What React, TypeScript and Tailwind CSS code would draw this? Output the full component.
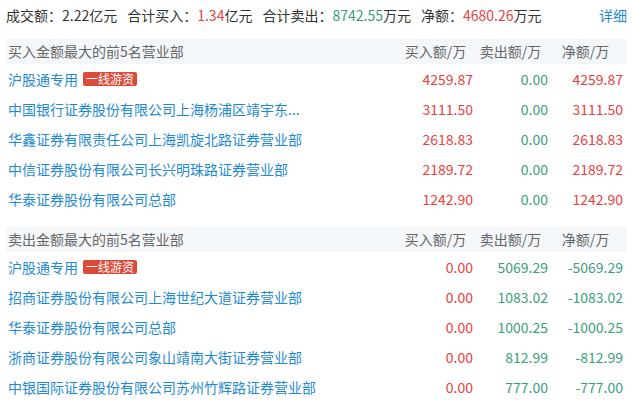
const FONT = '"Noto Sans CJK SC", "Open Sans", sans-serif';

type Row = {
  name: string;
  badge?: string;
  buy: string;
  sell: string;
  net: string;
};

const buyRows: Row[] = [
  { name: '沪股通专用', badge: '一线游资', buy: '4259.87', sell: '0.00', net: '4259.87' },
  { name: '中国银行证券股份有限公司上海杨浦区靖宇东...', buy: '3111.50', sell: '0.00', net: '3111.50' },
  { name: '华鑫证券有限责任公司上海凯旋北路证券营业部', buy: '2618.83', sell: '0.00', net: '2618.83' },
  { name: '中信证券股份有限公司长兴明珠路证券营业部', buy: '2189.72', sell: '0.00', net: '2189.72' },
  { name: '华泰证券股份有限公司总部', buy: '1242.90', sell: '0.00', net: '1242.90' },
];

const sellRows: Row[] = [
  { name: '沪股通专用', badge: '一线游资', buy: '0.00', sell: '5069.29', net: '-5069.29' },
  { name: '招商证券股份有限公司上海世纪大道证券营业部', buy: '0.00', sell: '1083.02', net: '-1083.02' },
  { name: '华泰证券股份有限公司总部', buy: '0.00', sell: '1000.25', net: '-1000.25' },
  { name: '浙商证券股份有限公司象山靖南大街证券营业部', buy: '0.00', sell: '812.99', net: '-812.99' },
  { name: '中银国际证券股份有限公司苏州竹辉路证券营业部', buy: '0.00', sell: '777.00', net: '-777.00' },
];

function Section({ title, rows }: { title: string; rows: Row[] }) {
  return (
    <div>
      {/* header band */}
      <div className="flex h-[25px] items-center bg-[#f4f7fa] pl-[2px] text-[14px] text-[#666666]">
        <div className="flex-1">{title}</div>
        <div className="w-[75px] text-center">买入额/万</div>
        <div className="w-[75px] text-center">卖出额/万</div>
        <div className="w-[75px] text-center">净额/万</div>
        <div className="w-[4px]" />
      </div>
      {rows.map((r, i) => {
        const netColor = r.net.startsWith('-') ? 'text-[#3a9e7c]' : 'text-[#e84141]';
        return (
          <div key={i} className="flex h-[30px] items-center pl-[2px] text-[14px]">
            <div className="flex flex-1 items-center gap-[5px] overflow-hidden">
              <span className="whitespace-nowrap text-[#1f8ad2]">{r.name}</span>
              {r.badge && (
                <span className="rounded-[2px] bg-[#dd4a39] px-[3px] text-[12px] leading-[14px] text-white">
                  {r.badge}
                </span>
              )}
            </div>
            <div className="w-[75px] text-right text-[#e84141]">{r.buy}</div>
            <div className="w-[75px] text-right text-[#3a9e7c]">{r.sell}</div>
            <div className={`w-[75px] text-right ${netColor}`}>{r.net}</div>
            <div className="w-[4px]" />
          </div>
        );
      })}
    </div>
  );
}

export default function App() {
  return (
    <div className="h-[401px] w-[633px] bg-white px-[6px]" style={{ fontFamily: FONT }}>
      {/* summary line */}
      <div className="flex h-[31px] items-center text-[14px] text-[#333333]">
        <div className="flex flex-1 gap-[10px] whitespace-nowrap">
          <span>
            成交额：<span>2.22</span>亿元
          </span>
          <span>
            合计买入：<span className="text-[#e84141]">1.34</span>亿元
          </span>
          <span>
            合计卖出：<span className="text-[#3a9e7c]">8742.55</span>万元
          </span>
          <span>
            净额：<span className="text-[#e84141]">4680.26</span>万元
          </span>
        </div>
        <a className="text-[#1f8ad2]">详细</a>
      </div>
      <div className="mt-[8px]">
        <Section title="买入金额最大的前5名营业部" rows={buyRows} />
      </div>
      <div className="mt-[13px]">
        <Section title="卖出金额最大的前5名营业部" rows={sellRows} />
      </div>
    </div>
  );
}
